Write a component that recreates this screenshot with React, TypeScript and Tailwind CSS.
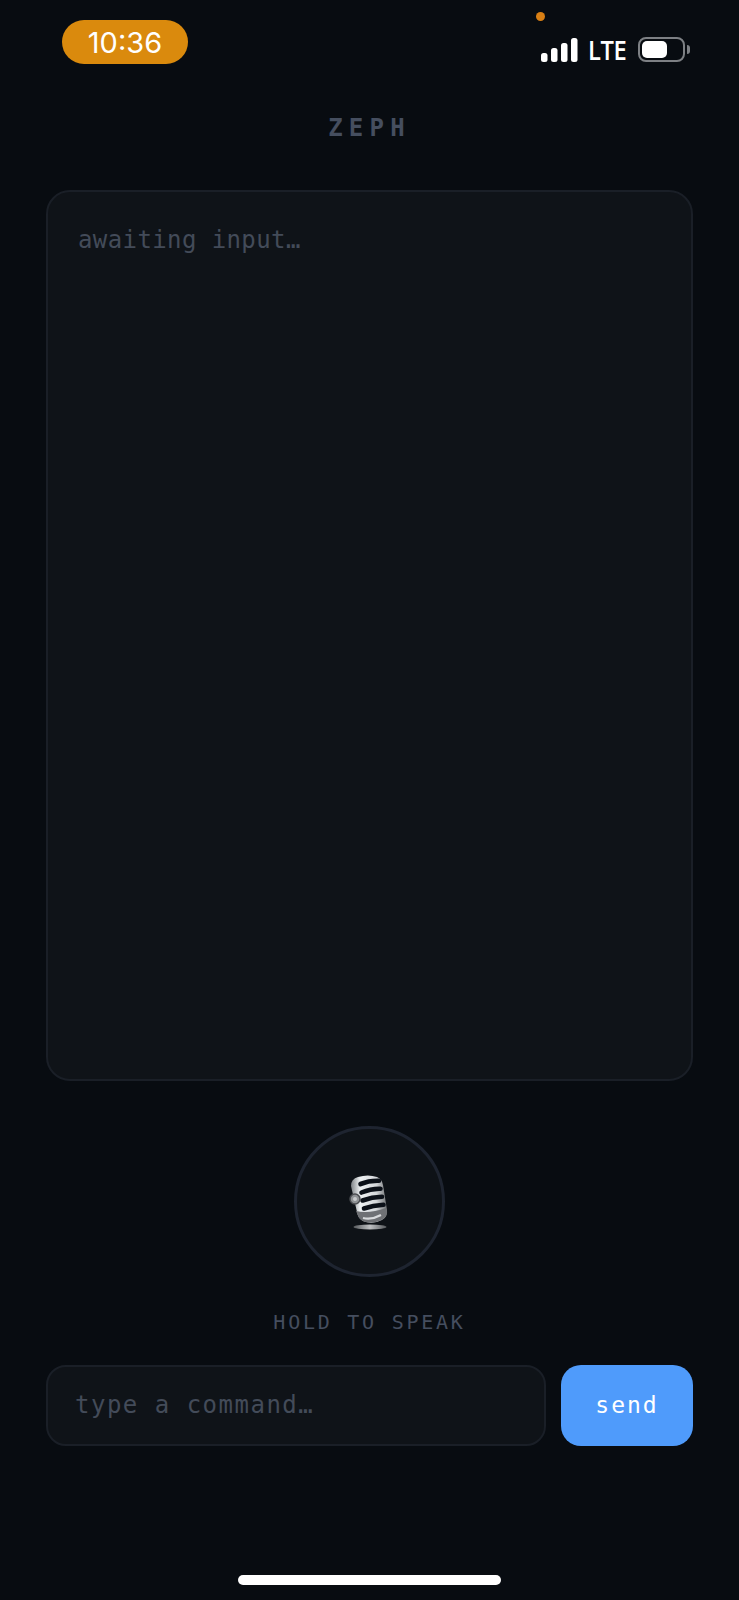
export default function App() {
  const mono = "font-['DejaVu_Sans_Mono',monospace]";
  return (
    <div className="w-[739px] h-[1600px] bg-[#080c11] flex flex-col overflow-hidden">
      <div className="h-[64px] mt-[20px] pl-[62px] pr-[50px] flex justify-between items-start">
        <div className="w-[126px] h-[44px] rounded-[22px] bg-[#da8a0d] flex items-center justify-center text-white text-[29px] font-['Inter',sans-serif] leading-none">10:36</div>
        <div className="flex flex-col items-start w-[150px]">
          <div className="w-[9px] h-[9px] rounded-full bg-[#d87f14] -mt-[8px] -ml-[3px]" />
          <div className="flex items-center mt-[16px] h-[25px] ml-[2px]">
            <svg width="37" height="24" viewBox="0 0 37 24" fill="#fff">
              <rect x="0" y="15" width="6.5" height="9" rx="2.5" />
              <rect x="10" y="10" width="6.5" height="14" rx="2.5" />
              <rect x="20" y="5" width="6.5" height="19" rx="2.5" />
              <rect x="30" y="0" width="6.5" height="24" rx="2.5" />
            </svg>
            <span className="ml-[10px] text-white text-[27px] leading-none font-semibold font-['Open_Sans',sans-serif] tracking-[-0.5px] [transform:scaleX(0.88)] origin-left w-[39px]">LTE</span>
            <div className="ml-[11px] w-[47px] h-[25px] rounded-[8px] border-2 border-[#7d8084] p-[2px] relative">
              <div className="w-[25px] h-full rounded-[5px] bg-white" />
              <div className="absolute -right-[7px] top-[6px] w-[3px] h-[9px] rounded-r-full bg-[#7d8084]" />
            </div>
          </div>
        </div>
      </div>

      <div className={`${mono} mt-[28px] h-[32px] text-center text-[#454e5f] text-[24px] leading-[32px] font-bold tracking-[6.2px]`}>ZEPH</div>

      <div className="mx-[46px] mt-[46px] h-[891px] rounded-[24px] border-2 border-[#1a1f27] bg-[#0f1318] px-[30px] pt-[30px]">
        <div className={`${mono} text-[#434b59] text-[24px] leading-[36px] tracking-[0.4px]`}>awaiting input…</div>
      </div>

      <div className="mt-[45px] self-center w-[151px] h-[151px] rounded-full border-[3px] border-[#1e2430] bg-[#0e1217] flex items-center justify-center">
        <svg width="42" height="56" viewBox="0 0 42 56">
          <defs>
            <linearGradient id="m" x1="0" x2="1" y1="0" y2="0">
              <stop offset="0" stopColor="#7f8387" />
              <stop offset="0.25" stopColor="#eef1f3" />
              <stop offset="0.7" stopColor="#d4d7da" />
              <stop offset="1" stopColor="#6f7174" />
            </linearGradient>
            <linearGradient id="b" x1="0" x2="1" y1="0" y2="0">
              <stop offset="0" stopColor="#55585c" />
              <stop offset="0.5" stopColor="#bfc1c3" />
              <stop offset="1" stopColor="#55585c" />
            </linearGradient>
          </defs>
          <ellipse cx="21" cy="53" rx="16.5" ry="2.4" fill="url(#b)" />
          <path d="M2 12 Q2 5 9 3 Q19 0 28 3 Q33 5 34 11 L38 36 Q39 43 33 46 Q23 51 14 47 Q9 44 8 38 Z" fill="url(#m)" />
          <path d="M7 37 Q20 40 37 34 L38 40 Q35 46 27 48 Q15 50 10 44 Z" fill="#6f7175" />
          <path d="M14 44 Q23 46 32 41" stroke="#d8dadc" strokeWidth="2.2" fill="none" />
          <path d="M11.5 10 Q20 6.5 30 6.8" stroke="#0b1018" strokeWidth="4.6" strokeLinecap="round" fill="none" />
          <path d="M12.5 18.5 Q22 14.5 31.5 14.8" stroke="#0b1018" strokeWidth="4.6" strokeLinecap="round" fill="none" />
          <path d="M13.5 26.5 Q23 23 33 22.8" stroke="#0b1018" strokeWidth="4.6" strokeLinecap="round" fill="none" />
          <path d="M15 34.5 Q24 31.5 34.5 30.8" stroke="#0b1018" strokeWidth="4.6" strokeLinecap="round" fill="none" />
          <circle cx="6" cy="25" r="5" fill="#8f9295" stroke="#4a4c50" strokeWidth="1.5" />
          <circle cx="6" cy="25" r="2" fill="#c8cacc" />
        </svg>
      </div>

      <div className={`${mono} mt-[31px] text-center text-[#454e5f] text-[20px] leading-[28px] tracking-[2.75px]`}>HOLD TO SPEAK</div>

      <div className="mx-[46px] mt-[29px] flex gap-[15px] h-[81px]">
        <div className={`${mono} flex-1 rounded-[20px] border-2 border-[#1a1f27] bg-[#0f1318] pl-[27px] flex items-center text-[#434b59] text-[24px] pb-[2px] tracking-[1.5px]`}>type a command…</div>
        <div className={`${mono} w-[132px] rounded-[20px] bg-[#4f9bfb] flex items-center justify-center text-white text-[23px] tracking-[2px]`}>send</div>
      </div>

      <div className="mt-[129px] self-center w-[263px] h-[10px] rounded-full bg-white" />
    </div>
  );
}
